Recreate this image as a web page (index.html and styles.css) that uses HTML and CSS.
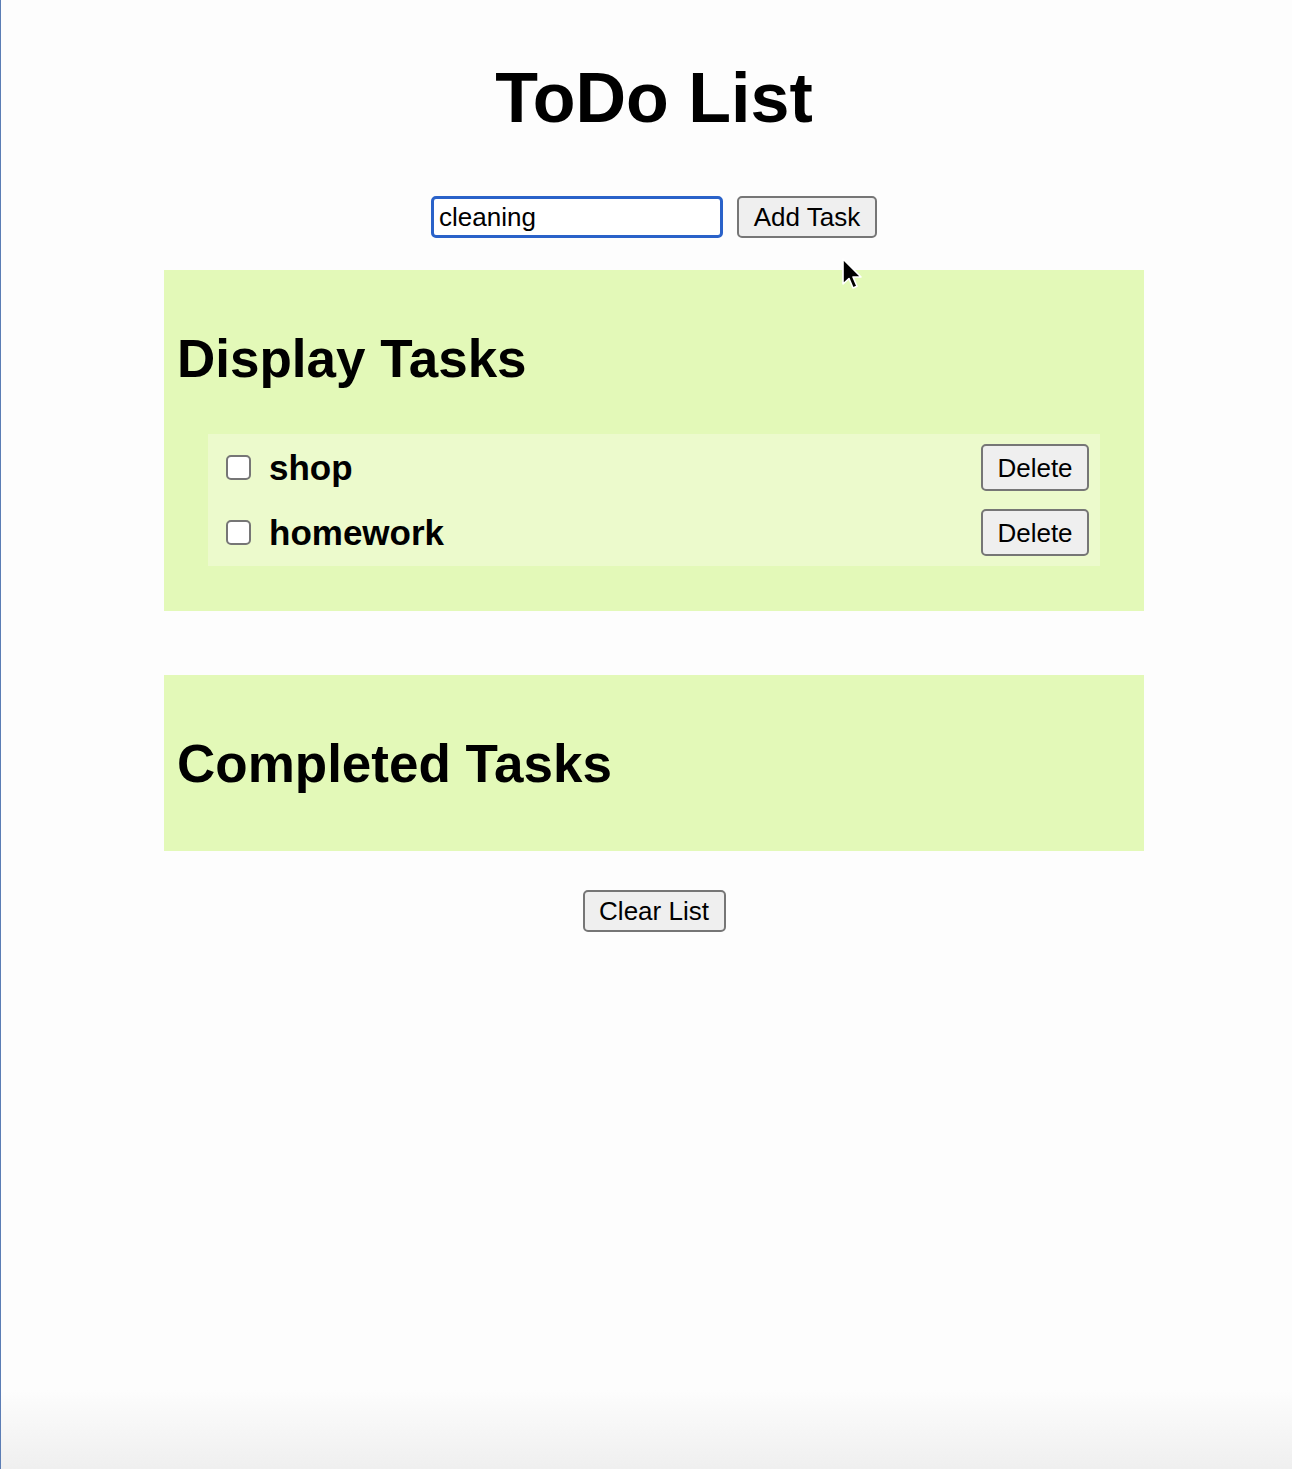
FILE: index.html
```html
<!DOCTYPE html>
<html lang="en">
<head>
<meta charset="utf-8">
<title>ToDo List</title>
<link rel="stylesheet" href="styles.css">
</head>
<body>
  <main class="app">
    <h1 class="title">ToDo List</h1>
    <form class="add-form">
      <input class="task-input" type="text" value="cleaning">
      <button class="btn btn-add" type="button">Add Task</button>
    </form>

    <section class="panel">
      <h2 class="panel-title">Display Tasks</h2>
      <ul class="task-list">
        <li class="task">
          <label class="task-label"><input class="check" type="checkbox"><span>shop</span></label>
          <button class="btn btn-delete" type="button">Delete</button>
        </li>
        <li class="task">
          <label class="task-label"><input class="check" type="checkbox"><span>homework</span></label>
          <button class="btn btn-delete" type="button">Delete</button>
        </li>
      </ul>
    </section>

    <section class="panel panel-completed">
      <h2 class="panel-title">Completed Tasks</h2>
    </section>

    <div class="footer">
      <button class="btn btn-clear" type="button">Clear List</button>
    </div>
  </main>

  <svg class="pointer" width="22" height="34" viewBox="0 0 22 34" aria-hidden="true">
    <path d="M2 2 L2 27 L8 21.5 L12 31 L16 29.3 L12 20 L20 20 Z" fill="#000" stroke="#fff" stroke-width="1.6" stroke-linejoin="round"/>
  </svg>
</body>
</html>
```

FILE: styles.css
```css
html {
  min-height: 1469px;
  border-left: 1px solid #5b7db5;
  background: linear-gradient(to bottom, #fdfdfd 0, #fdfdfd 1390px, #efefef 1469px);
}

body {
  margin: 0;
  padding: 58px 0 0 15px;
  font-family: "Liberation Sans", Arial, sans-serif;
  color: #000;
  position: relative;
}

.app {
  display: flex;
  flex-direction: column;
  align-items: center;
}

.title {
  margin: 0;
  font-size: 70px;
  line-height: 80px;
  font-weight: 700;
}

.add-form {
  margin-top: 58px;
  display: flex;
  gap: 14px;
}

.task-input {
  box-sizing: border-box;
  width: 292px;
  height: 42px;
  margin: 0;
  padding: 0 5px;
  border: 3px solid #2a62c9;
  border-radius: 5px;
  background: #fff;
  font-family: "Liberation Sans", Arial, sans-serif;
  font-size: 26px;
  color: #000;
  outline: none;
}

.btn {
  box-sizing: border-box;
  margin: 0;
  border: 2px solid #767676;
  border-radius: 5px;
  background: #efefef;
  color: #000;
  font-family: "Liberation Sans", Arial, sans-serif;
  font-size: 26px;
  line-height: 1;
}

.btn-add {
  width: 140px;
  height: 42px;
  padding: 0;
}

.panel {
  box-sizing: border-box;
  width: 980px;
  margin-top: 32px;
  padding: 59px 13px 45px;
  background: #e3f9b8;
}

.panel-completed {
  margin-top: 64px;
  padding-bottom: 12px;
}

.panel-title {
  margin: 0 0 45px;
  font-size: 53px;
  line-height: 60px;
  font-weight: 700;
}

.task-list {
  list-style: none;
  margin: 0 31px;
  padding: 10px 11px 10px 18px;
  background: #ecfacc;
  display: flex;
  flex-direction: column;
  gap: 18px;
}

.task {
  display: flex;
  align-items: center;
  justify-content: space-between;
  height: 47px;
}

.task-label {
  display: flex;
  align-items: center;
  gap: 18px;
  font-size: 35px;
  font-weight: 700;
}

.check {
  appearance: none;
  -webkit-appearance: none;
  box-sizing: border-box;
  width: 25px;
  height: 25px;
  margin: 0;
  border: 2px solid #767676;
  border-radius: 5px;
  background: #fff;
}

.btn-delete {
  width: 108px;
  height: 47px;
  padding: 0;
}

.footer {
  margin-top: 39px;
}

.btn-clear {
  width: 143px;
  height: 42px;
  padding: 0;
}

.pointer {
  position: absolute;
  left: 840px;
  top: 257px;
}
```
